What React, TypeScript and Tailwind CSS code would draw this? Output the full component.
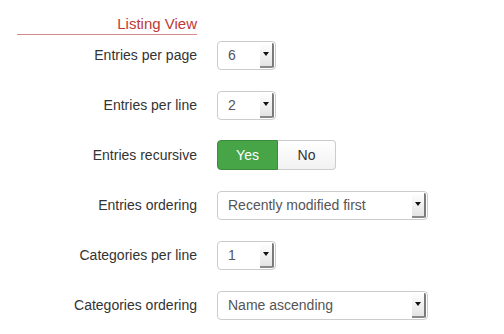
import React from "react";

function Select({ value, wide }: { value: string; wide?: boolean }) {
  return (
    <div
      className={`relative flex h-[29px] items-center rounded-[4px] border border-[#cccccc] bg-white ${
        wide ? "w-[211px]" : "w-[59px]"
      }`}
    >
      <span className="pl-[10px] text-[14px] text-[#555555]">{value}</span>
      <div className="absolute right-[1px] top-[1px] bottom-[1px] flex w-[14px] items-center justify-center rounded-r-[2px] border-r-2 border-b-2 border-r-[#7a7a7a] border-b-[#8a8a8a] bg-gradient-to-b from-[#ffffff] to-[#e4e4e4]">
        <svg width="6" height="4" viewBox="0 0 6 4">
          <path d="M0 0 L6 0 L3 4 Z" fill="#111" />
        </svg>
      </div>
    </div>
  );
}

function Row({ label, children }: { label: string; children: React.ReactNode }) {
  return (
    <div className="mb-[20px] flex h-[30px] items-center">
      <div className="w-[180px] text-right text-[14px] text-[#333333]">{label}</div>
      <div className="ml-[20px]">{children}</div>
    </div>
  );
}

export default function App() {
  return (
    <div
      className="h-[334px] w-[504px] bg-white pl-[17px] pt-[14px]"
      style={{ fontFamily: '"Liberation Sans", Arial, sans-serif' }}
    >
      <div className="mb-[5px] w-[180px] border-b border-[#d48a8a] pb-[1px] text-right text-[15px] leading-[19px] text-[#bd3a36]">
        Listing View
      </div>
      <Row label="Entries per page">
        <Select value="6" />
      </Row>
      <Row label="Entries per line">
        <Select value="2" />
      </Row>
      <Row label="Entries recursive">
        <div className="flex h-[30px] text-[14px]">
          <div className="flex w-[61px] items-center justify-center rounded-l-[4px] border border-[#3d8b3d] bg-[#47a447] text-white">
            Yes
          </div>
          <div className="flex w-[58px] items-center justify-center rounded-r-[4px] border border-l-0 border-[#cccccc] bg-gradient-to-b from-[#ffffff] to-[#f2f2f2] text-[#333333]">
            No
          </div>
        </div>
      </Row>
      <Row label="Entries ordering">
        <Select value="Recently modified first" wide />
      </Row>
      <Row label="Categories per line">
        <Select value="1" />
      </Row>
      <Row label="Categories ordering">
        <Select value="Name ascending" wide />
      </Row>
    </div>
  );
}
